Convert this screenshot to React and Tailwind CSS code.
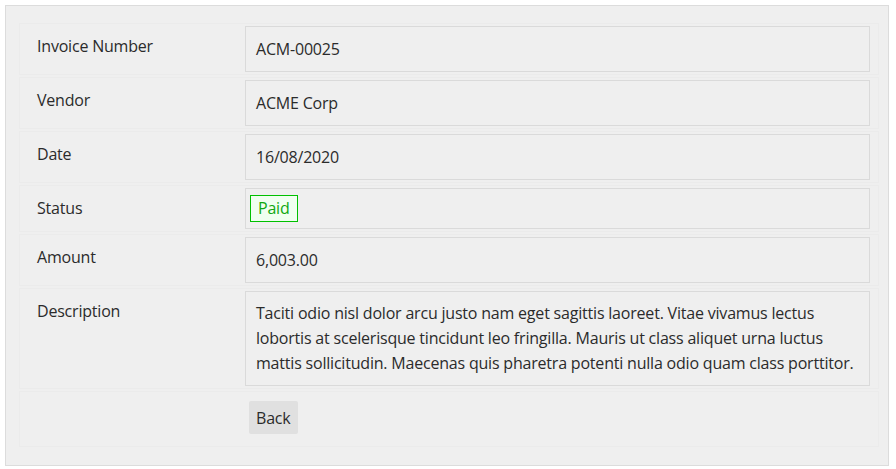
import React from "react";

const font = { fontFamily: "'Open Sans', 'Noto Sans', sans-serif" };

function Row({ label, children, boxClass = "px-[10px] py-[10px]" }) {
  return (
    <div className="flex border border-[#ebebeb] py-[2px] pr-[8px]">
      <div className="w-[225px] shrink-0 pl-[17px] pt-[8px] leading-6">{label}</div>
      <div className={"flex-1 border border-[#dadada] leading-6 " + boxClass}>{children}</div>
    </div>
  );
}

export default function App() {
  return (
    <div className="bg-white w-[896px] h-[469px] pt-[5px] pl-[5px] text-[16px] tracking-[-0.2px] text-[#2b2b2b]" style={font}>
      <div className="w-[884px] h-[461px] border border-[#dcdcdc] bg-[#efefef] pt-[17px] pl-[13px] pr-[9px] flex flex-col gap-[2px]">
        <Row label="Invoice Number">ACM-00025</Row>
        <Row label="Vendor">ACME Corp</Row>
        <Row label="Date">16/08/2020</Row>
        <Row label="Status" boxClass="px-[4px] py-[6px] leading-6 flex">
          <span className="border border-[#00c000] bg-[#f0fff0] text-[#10a810] px-[7px] leading-[25px]">Paid</span>
        </Row>
        <Row label="Amount">6,003.00</Row>
        <Row label="Description" boxClass="px-[10px] py-[9px] leading-[25px]">
          Taciti odio nisl dolor arcu justo nam eget sagittis laoreet. Vitae vivamus lectus
          <br />
          lobortis at scelerisque tincidunt leo fringilla. Mauris ut class aliquet urna luctus
          <br />
          mattis sollicitudin. Maecenas quis pharetra potenti nulla odio quam class porttitor.
        </Row>
        <div className="flex border border-[#ebebeb] pt-[9px] pb-[12px] pr-[8px]">
          <div className="w-[229px] shrink-0"></div>
          <button className="bg-[#e0e0e0] rounded-[2px] px-[7px] h-[33px] leading-6 text-[#2b2b2b]" style={font}>Back</button>
        </div>
      </div>
    </div>
  );
}
